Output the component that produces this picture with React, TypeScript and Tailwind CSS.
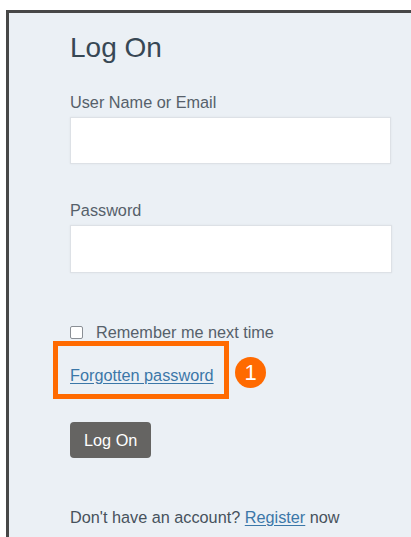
export default function App() {
  return (
    <div className="w-[411px] h-[537px] overflow-hidden bg-white pt-[10px] pl-[6px] font-['Liberation_Sans',Arial,sans-serif]">
      <div className="h-full border-l-[3px] border-t-[3px] border-[#474747] bg-[#ebf0f5] pl-[61px] pt-[19px] pr-[19px]">
        <h1 className="text-[28px] leading-[32px] text-[#374754] font-normal">Log On</h1>

        <label className="block mt-[28px] text-[16.25px] leading-[20px] text-[#56606a]">User Name or Email</label>
        <input
          type="text"
          className="block mt-[5px] w-[321px] h-[47px] bg-white border border-[#dde1e6] shadow-[0_0_2px_rgba(0,0,0,0.06)] outline-none"
        />

        <label className="block mt-[36px] text-[16.25px] leading-[20px] text-[#56606a]">Password</label>
        <input
          type="password"
          className="block mt-[5px] w-[322px] h-[48px] bg-white border border-[#dde1e6] shadow-[0_0_2px_rgba(0,0,0,0.06)] outline-none"
        />

        <div className="mt-[49px] flex items-center h-[20px] text-[16.25px] leading-[20px] text-[#56606a]">
          <span className="w-[13px] h-[13px] rounded-[2px] border border-[#8a8f95] bg-white" />
          <span className="ml-[13px]">Remember me next time</span>
        </div>

        <div className="relative mt-[23px] h-[20px] text-[16.25px] leading-[20px]">
          <a href="#" className="text-[#3b77a8] underline underline-offset-2">Forgotten password</a>
          <span className="absolute left-[-17px] top-[-24px] w-[176px] h-[58px] border-[5px] border-[#ff6a00] pointer-events-none" />
          <span className="absolute left-[165px] top-[-8px] w-[31px] h-[31px] rounded-full bg-[#ff6a00] text-white text-[22px] leading-[31px] text-center">1</span>
        </div>

        <button className="mt-[37px] h-[36px] px-[14px] rounded-[4px] bg-[#656462] text-white text-[16.25px] leading-[20px]">Log On</button>

        <p className="mt-[49px] text-[16.25px] leading-[20px] text-[#47525c]">
          Don't have an account? <a href="#" className="text-[#3b77a8] underline underline-offset-2">Register</a> now
        </p>
      </div>
    </div>
  );
}
